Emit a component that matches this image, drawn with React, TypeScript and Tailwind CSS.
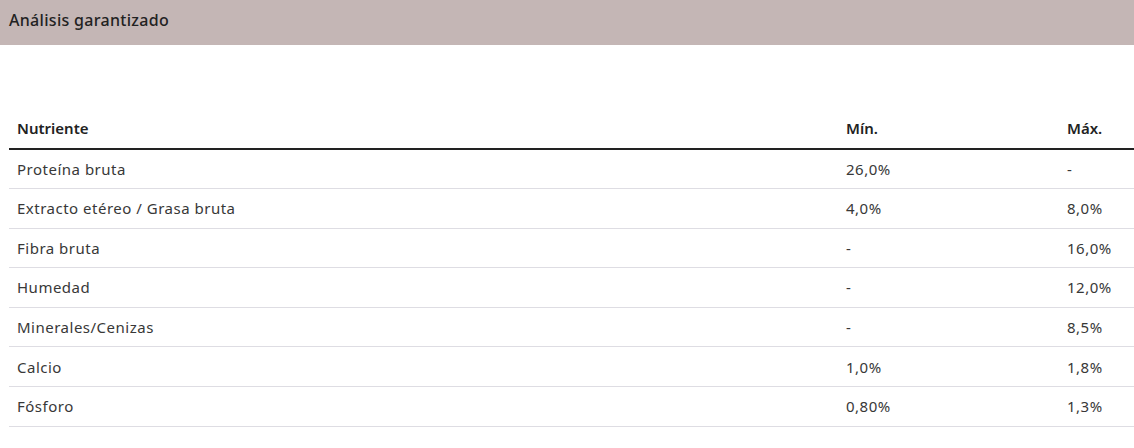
import React from "react";

const rows: [string, string, string][] = [
  ["Proteína bruta", "26,0%", "-"],
  ["Extracto etéreo / Grasa bruta", "4,0%", "8,0%"],
  ["Fibra bruta", "-", "16,0%"],
  ["Humedad", "-", "12,0%"],
  ["Minerales/Cenizas", "-", "8,5%"],
  ["Calcio", "1,0%", "1,8%"],
  ["Fósforo", "0,80%", "1,3%"],
];

export default function App() {
  return (
    <div
      className="w-[1134px] h-[448px] bg-white overflow-hidden"
      style={{ fontFamily: '"Noto Sans", "Open Sans", sans-serif' }}
    >
      <div className="h-[45px] bg-[#c4b6b5] flex items-center pl-[9px] pb-[6px]">
        <h2 className="text-[16px] font-medium text-[#222] tracking-[0.3px]">Análisis garantizado</h2>
      </div>
      <div className="pl-[9px] pt-[64px]">
        <table className="w-[1125px] border-collapse text-[15px] text-[#383838] tracking-[0.5px]">
          <thead>
            <tr className="border-b-2 border-[#222]">
              <th className="h-[40px] text-left font-semibold text-[#222] tracking-normal pl-[8px] w-[829px]">Nutriente</th>
              <th className="h-[40px] text-left font-semibold text-[#222] tracking-normal pl-[8px] w-[221px]">Mín.</th>
              <th className="h-[40px] text-left font-semibold text-[#222] tracking-normal pl-[8px]">Máx.</th>
            </tr>
          </thead>
          <tbody>
            {rows.map((r) => (
              <tr key={r[0]} className="h-[39.6px] border-b border-[#dedde3]">
                <td className="pl-[8px]">{r[0]}</td>
                <td className="pl-[8px]">{r[1]}</td>
                <td className="pl-[8px]">{r[2]}</td>
              </tr>
            ))}
          </tbody>
        </table>
      </div>
    </div>
  );
}
